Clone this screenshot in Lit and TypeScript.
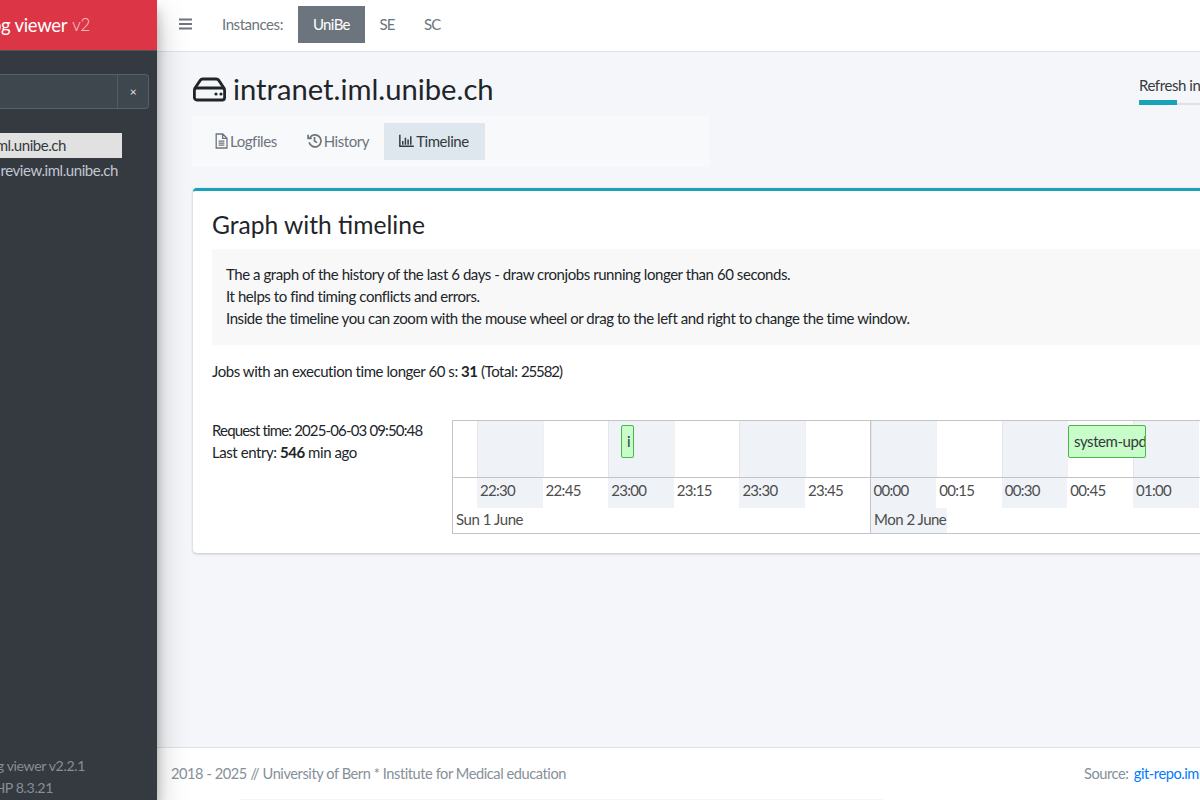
import { LitElement, html, css, svg } from "lit";
import { customElement } from "lit/decorators.js";

const FONT = css`Lato, "Noto Sans", sans-serif`;

const T1 = ["22:30","22:45","23:00","23:15","23:30","23:45"];
const T2 = ["00:00","00:15","00:30","00:45","01:00"];

@customElement("app-root")
export class AppRoot extends LitElement {
  static styles = css`
    :host { display: block; width: 1200px; height: 800px; overflow: hidden; font-family: ${FONT}; font-size: 15px; letter-spacing: -.44px; line-height: 22px; color: #212529; background: #f4f6f9; }
    .layout { display: grid; grid-template-columns: 157px 1043px; height: 800px; }
    .side { background: #343a40; display: flex; flex-direction: column; overflow: hidden; box-shadow: 0 14px 28px rgba(0,0,0,.25), 0 10px 10px rgba(0,0,0,.22); position: relative; z-index: 2; }
    .brand { height: 51px; flex: none; background: #dc3545; border-bottom: 1px solid #4b545c; box-sizing: border-box; color: #fff; font-size: 18.5px; letter-spacing: -.3px; line-height: 50px; white-space: nowrap; display: flex; justify-content: flex-end; padding-right: 67px; }
    .brand span { font-weight: 300; font-size: 17px; opacity: .75; margin-left: 5px; }
    .search { display: flex; margin: 23px 8px 0 0; height: 35px; border: 1px solid #56606a; border-left: 0; border-radius: 0 4px 4px 0; background: #3f474e; box-sizing: border-box; }
    .search .field { flex: 1; }
    .search .x { width: 30px; border-left: 1px solid #56606a; color: #fff; font-size: 12px; display: flex; align-items: center; justify-content: center; opacity: .85; }
    .menu { margin-top: 24px; display: flex; flex-direction: column; white-space: nowrap; }
    .item { height: 25px; line-height: 24px; margin-right: 35px; display: flex; justify-content: flex-end; box-sizing: border-box; }
    .item.on { background: #e1e1e1; color: #343a40; padding-right: 56px; }
    .item.next { color: #c2c7d0; padding-right: 4px; }
    .sfoot { margin-top: auto; color: #868e96; font-size: 14.2px; letter-spacing: -.4px; white-space: nowrap; height: 45px; }
    .sfoot div { display: flex; justify-content: flex-end; }
    .sfoot .a { padding-right: 72px; }
    .sfoot .b { padding-right: 104px; }
    .main { display: flex; flex-direction: column; height: 800px; min-width: 0; }
    .top { height: 52px; flex: none; box-sizing: border-box; background: #fff; border-bottom: 1px solid #dee2e6; display: flex; align-items: center; color: #6c757d; padding-left: 22px; }
    .burger { width: 13px; height: 14px; margin-right: 30px; margin-bottom: 3px; color: #6c757d; }
    .lbl { margin-right: 15px; margin-bottom: 3px; }
    .inst { height: 37px; line-height: 36px; padding: 0 14.5px; margin-bottom: 3px; letter-spacing: -.65px; }
    .inst.on { background: #6c757d; color: #fff; padding: 0 15px; }
    .content { flex: 1; min-height: 0; padding: 0 0 0 35px; overflow: hidden; position: relative; }
    .head { display: flex; justify-content: space-between; height: 64px; }
    h1 { margin: 21px 0 0; height: 32px; font-weight: 400; font-size: 29.2px; letter-spacing: 0; line-height: 32px; display: flex; align-items: center; gap: 6px; color: #212529; white-space: nowrap; }
    h1 svg { width: 35px; height: 28px; }
    .refresh { width: 120px; margin: 22px -59px 0 0; flex: none; white-space: nowrap; color: #343a40; }
    .refresh .bar { height: 5px; box-sizing: border-box; border-bottom: 2px solid #e0e0e0; margin-top: 4px; width: 120px; }
    .refresh .fill { height: 5px; width: 38px; background: #17a2b8; }
    .tabs { width: 518px; height: 51px; box-sizing: border-box; padding: 7px 0 0 8px; background: #f8f9fb; display: flex; color: #6c757d; }
    .tab { height: 37px; box-sizing: border-box; padding: 0 15px 2px; display: flex; align-items: center; gap: 2px; white-space: nowrap; }
    .tab svg { width: 15px; height: 15px; flex: none; }
    .tab svg.file { width: 13px; height: 16px; }
    .tab.on { background: #dee6ee; color: #343a40; padding-right: 16px; }
    .card { margin: 21px 0 0 1px; width: 1100px; height: 365px; box-sizing: border-box; background: #fff; border-top: 3px solid #17a2b8; border-radius: 4px; box-shadow: 0 0 1px rgba(0,0,0,.125), 0 1px 3px rgba(0,0,0,.2); padding: 18px 20px 0 19px; }
    h2 { margin: 0; font-weight: 400; font-size: 24.6px; letter-spacing: 0; line-height: 32px; color: #212529; }
    .callout { margin-top: 8px; background: #f8f8f8; height: 96px; box-sizing: border-box; padding: 14px 14px; width: 1060px; }
    .jobs { margin-top: 15px; }
    .tight { letter-spacing: -1.1px; }
    .row { display: flex; margin-top: 37px; }
    .req { width: 240px; flex: none; }
    .stamp { letter-spacing: -.85px; }
    .tl { width: 800px; height: 114px; box-sizing: border-box; border: 1px solid #c4c4c4; position: relative; flex: none; color: #4d4d4d; overflow: hidden; margin-top: 1px; }
    .cells { display: flex; height: 56px; padding-left: 24px; }
    .cell { width: 65.6px; flex: none; box-sizing: border-box; }
    .cell.g { background: #eff3f8; border-left: 1px solid #e4e6ea; }
    .cell.w { border-left: 1px solid #f0f0f0; }
    .axis { display: flex; height: 30px; padding-left: 24px; border-top: 1px solid #c4c4c4; line-height: 25px; letter-spacing: -.7px; }
    .axis .cell { padding-left: 3px; border-left: 0; }
    .major-line { position: absolute; left: 417px; top: 0; bottom: 0; width: 1px; background: #c4c4c4; }
    .days { display: flex; height: 26px; line-height: 23px; }
    .d1 { padding-left: 3px; width: 415px; flex: none; }
    .d2 { padding: 0 2px 0 3px; background: #eff3f8; white-space: nowrap; width: 76px; box-sizing: border-box; letter-spacing: -.5px; }
    .job { position: absolute; top: 4px; height: 33px; box-sizing: border-box; background: #c8fcc8; border: 1px solid #48b848; border-radius: 2px; line-height: 30px; overflow: hidden; white-space: nowrap; padding-left: 5px; color: #343a40; }
    .foot { height: 53px; flex: none; box-sizing: border-box; background: #fff; border-top: 1px solid #dee2e6; color: #869099; display: flex; justify-content: space-between; padding: 15px 0 0 14px; white-space: nowrap; font-size: 14.6px; letter-spacing: -.43px; position: relative; }
    .foot::after { content: ""; position: absolute; left: 83px; bottom: 0; width: 643px; height: 1px; background: #f6f6f6; }
    .foot .src { width: 116px; flex: none; }
    a { color: #007bff; text-decoration: none; margin-left: 2px; }
  `;

  private burger() {
    return svg`<path d="M0 1.6h13v2H0zM0 6h13v2H0zM0 10.4h13v2H0z" fill="currentColor"/>`;
  }

  render() {
    return html`<div class="layout">
      <aside class="side">
        <div class="brand">og viewer<span>v2</span></div>
        <div class="search"><div class="field"></div><div class="x">×</div></div>
        <div class="menu">
          <div class="item on">ml.unibe.ch</div>
          <div class="item next">review.iml.unibe.ch</div>
        </div>
        <div class="sfoot"><div class="a">g viewer v2.2.1</div><div class="b">HP 8.3.21</div></div>
      </aside>
      <div class="main">
        <header class="top">
          <svg class="burger" viewBox="0 0 13 14">${this.burger()}</svg>
          <span class="lbl">Instances:</span>
          <span class="inst on">UniBe</span><span class="inst">SE</span><span class="inst">SC</span>
        </header>
        <main class="content">
          <div class="head">
            <h1><svg viewBox="0 0 35 28" fill="none" stroke="#212529" stroke-width="2.8"><path d="M2.4 14 8.2 5.4C8.8 4.5 9.6 4 10.8 4h13.4c1.2 0 2 .5 2.6 1.4L32.6 14"/><rect x="2.4" y="13" width="30.2" height="12" rx="2.5"/><circle cx="24" cy="19" r="1.6" fill="#212529" stroke="none"/><circle cx="29" cy="19" r="1.6" fill="#212529" stroke="none"/></svg>intranet.iml.unibe.ch</h1>
            <div class="refresh">Refresh in<div class="bar"><div class="fill"></div></div></div>
          </div>
          <nav class="tabs">
            <div class="tab"><svg class="file" viewBox="0 0 13 16" fill="none" stroke="currentColor" stroke-width="1.3"><path d="M1.2 1h6.6L12 5.2V15H1.2zM7.6 1.2v4.2h4.2M3.6 8.2h5.8M3.6 10.2h5.8M3.6 12.2h5.8"/></svg>Logfiles</div>
            <div class="tab"><svg viewBox="0 0 14 14" fill="none" stroke="currentColor" stroke-width="1.6"><path d="M2.6 4.6A5.6 5.6 0 1 1 2 8.6M1 1.6v3.4h3.4M7 3.8v3.6l2.4 1.6"/></svg>History</div>
            <div class="tab on"><svg viewBox="0 0 14 14" fill="none" stroke="currentColor" stroke-width="1.4"><path d="M.8 1.6v10.8h13M3.5 7.5v3.5M6 4.5v6.5M8.5 6v5M11 3v8"/></svg>Timeline</div>
          </nav>
          <section class="card">
            <h2>Graph with timeline</h2>
            <div class="callout">The a graph of the history of the last 6 days - draw cronjobs running longer than 60 seconds.<br>It helps to find timing conflicts and errors.<br>Inside the timeline you can zoom with the mouse wheel or drag to the left and right to change the time window.</div>
            <div class="jobs">Jobs with an execution time longer 60 s: <b>31</b> (Total: <span class="tight">25582</span>)</div>
            <div class="row">
              <div class="req"><span class="stamp">Request time: 2025-06-03 09:50:48</span><br>Last entry: <b>546</b> min ago</div>
              <div class="tl">
                <div class="cells">
                  ${[...T1, ...T2].map((_, i) => html`<div class="cell ${i % 2 ? "w" : "g"}"></div>`)}
                </div>
                <div class="axis">
                  ${[...T1, ...T2].map((t, i) => html`<div class="cell ${i % 2 ? "w" : "g"}">${t}</div>`)}
                </div>
                <div class="days"><div class="d1">Sun 1 June</div><div class="d2">Mon 2 June</div></div>
                <div class="major-line"></div>
                <div class="job" style="left:168px;width:13px">i</div>
                <div class="job" style="left:615px;width:78px">system-update</div>
              </div>
            </div>
          </section>
        </main>
        <footer class="foot"><span>2018 - 2025 // University of Bern * Institute for Medical education</span><span class="src">Source: <a>git-repo.iml.unibe.ch</a></span></footer>
      </div>
    </div>`;
  }
}
